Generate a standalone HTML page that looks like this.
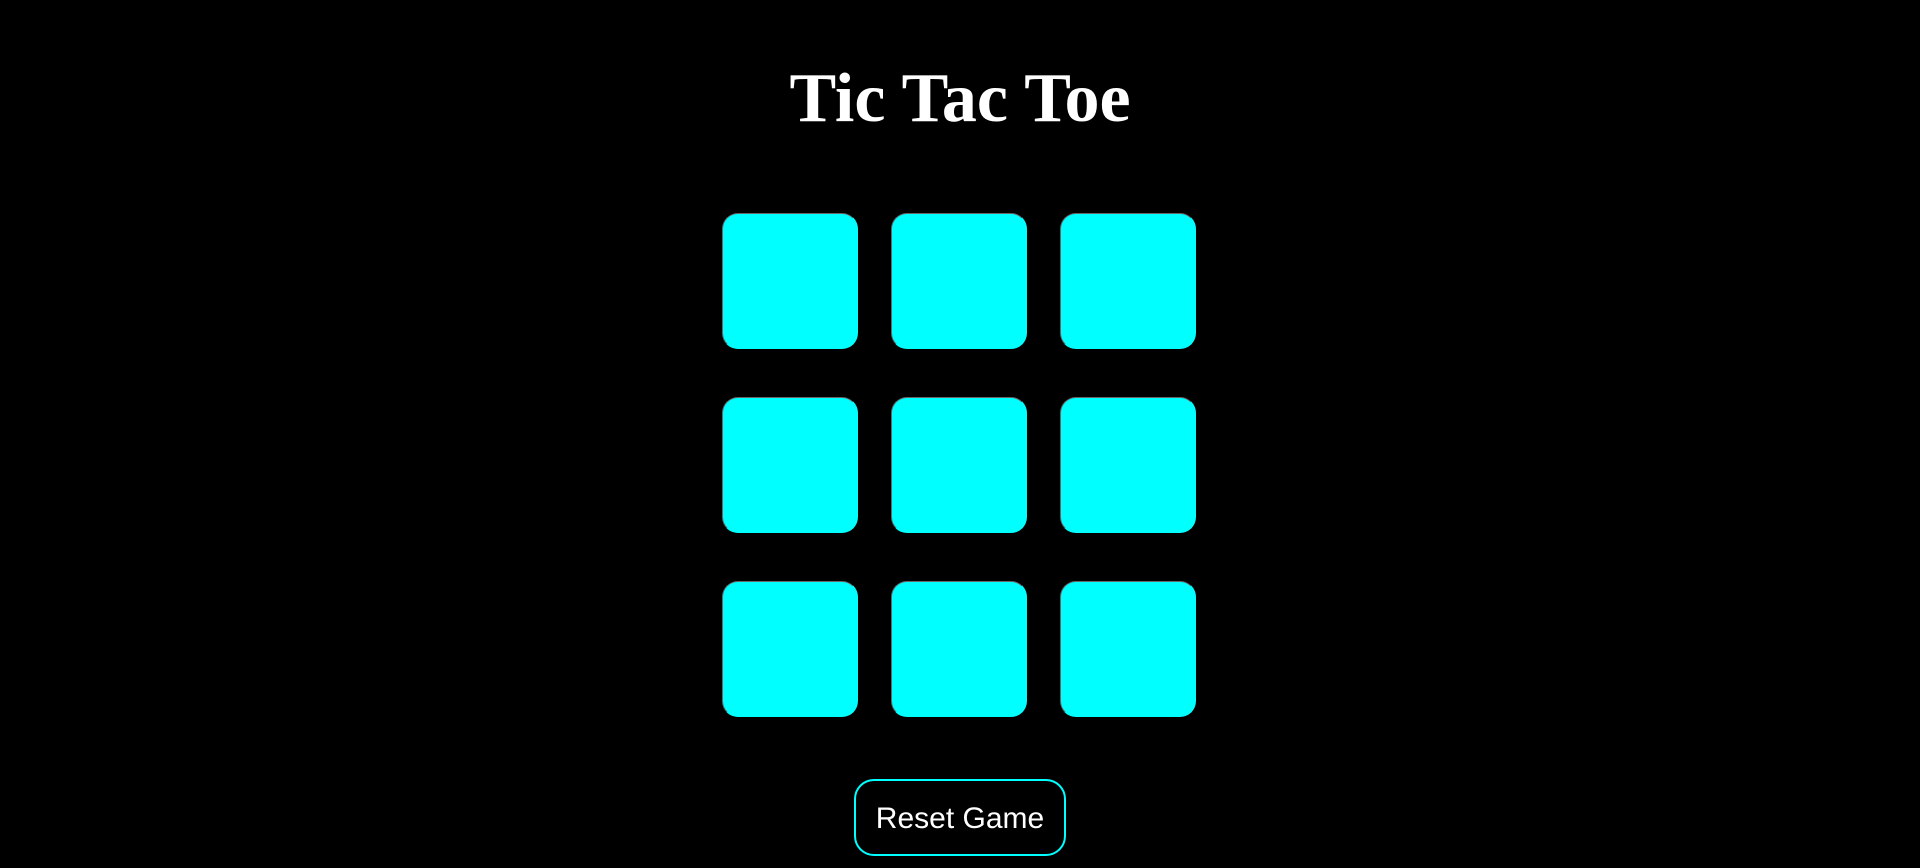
<!DOCTYPE html>
<html><head><meta charset="utf-8"><style>
html,body{margin:0;padding:0;background:#000;width:1920px;height:868px;overflow:hidden;}
h1{position:absolute;left:0;width:1920px;top:66px;margin:0;text-align:center;font-family:"Liberation Serif",serif;font-weight:bold;font-size:70px;line-height:66px;color:#fff;}
.cell{position:absolute;width:134px;height:134px;background:#0ff;border:1px solid #666;border-right-color:#0ff;border-bottom-color:#0ff;border-radius:16px;box-sizing:content-box;}
.btn{position:absolute;left:854px;top:779px;width:208px;height:73px;border:2px solid #0ff;border-radius:20px;color:#fff;font-family:"Liberation Sans",sans-serif;font-size:30px;line-height:75px;text-align:center;}
</style></head><body>
<h1>Tic Tac Toe</h1>
<div class="cell" style="left:722px;top:213px"></div>
<div class="cell" style="left:891px;top:213px"></div>
<div class="cell" style="left:1060px;top:213px"></div>
<div class="cell" style="left:722px;top:397px"></div>
<div class="cell" style="left:891px;top:397px"></div>
<div class="cell" style="left:1060px;top:397px"></div>
<div class="cell" style="left:722px;top:581px"></div>
<div class="cell" style="left:891px;top:581px"></div>
<div class="cell" style="left:1060px;top:581px"></div>
<div class="btn">Reset Game</div>
</body></html>
